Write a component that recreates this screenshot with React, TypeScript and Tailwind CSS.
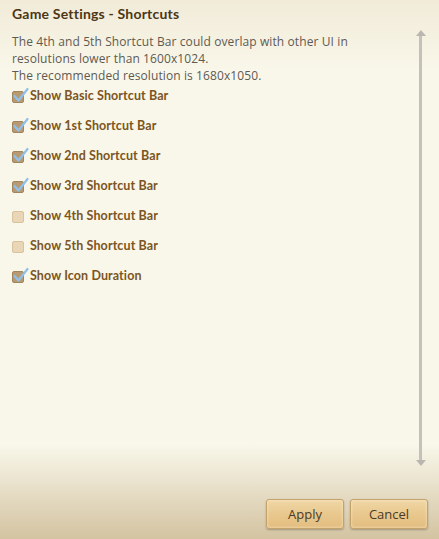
import React from 'react';

const options = [
  { label: 'Show Basic Shortcut Bar', on: true },
  { label: 'Show 1st Shortcut Bar', on: true },
  { label: 'Show 2nd Shortcut Bar', on: true },
  { label: 'Show 3rd Shortcut Bar', on: true },
  { label: 'Show 4th Shortcut Bar', on: false },
  { label: 'Show 5th Shortcut Bar', on: false },
  { label: 'Show Icon Duration', on: true },
];

const Check = ({ on }: { on: boolean }) => (
  <div className="relative w-[13px] h-[13px] shrink-0">
    <div
      className={
        on
          ? 'absolute left-0 top-[1px] w-[12px] h-[12px] rounded-[2px] bg-[#b89a72] border border-[#a3855d]'
          : 'absolute left-0 top-[1px] w-[12px] h-[12px] rounded-[2px] bg-[#e8d6b6] border border-[#d9c29c]'
      }
    />
    {on && (
      <svg className="absolute left-[1px] -top-[3px]" width="16" height="16" viewBox="0 0 16 16">
        <path d="M1.5 9 L5.5 13.5 L14.5 2" fill="none" stroke="#8fc0ec" strokeWidth="2.2" strokeLinecap="round" strokeLinejoin="round" />
      </svg>
    )}
  </div>
);

const Btn = ({ children }: { children: React.ReactNode }) => (
  <button className="w-[78px] h-[30px] rounded-[3px] border border-[#c4a26c] bg-gradient-to-b from-[#f0d7a6] via-[#e9c88e] to-[#e3bd80] shadow-[inset_0_0_3px_rgba(255,240,210,0.8),0_1px_2px_rgba(0,0,0,0.25)] text-[13px] text-[#4b3a24] pt-[2px]">
    {children}
  </button>
);

export default function App() {
  return (
    <div
      className="w-[439px] h-[539px] flex flex-col bg-[linear-gradient(to_bottom,#f1ebd8_0px,#f9f7ea_70px,#f9f7ea_445px,#d3c3a1_539px)] overflow-hidden"
      style={{ fontFamily: '"Open Sans", "Noto Sans", sans-serif' }}
    >
      <div className="flex flex-1 min-h-0">
        <div className="flex-1 pl-[12px] pt-[4px]">
          <h1
            className="text-[14px] leading-[20px] font-bold text-[#4d3616] tracking-[0.2px]"
            style={{ fontFamily: 'Lato, "Open Sans", sans-serif' }}
          >
            Game Settings - Shortcuts
          </h1>
          <p className="mt-[9px] text-[12px] leading-[17px] text-[#5e5a52] tracking-[0.1px]">
            The 4th and 5th Shortcut Bar could overlap with other UI in
            <br />
            resolutions lower than 1600x1024.
            <br />
            The recommended resolution is 1680x1050.
          </p>
          <div className="mt-[3px] flex flex-col gap-[11px]">
            {options.map((o) => (
              <div key={o.label} className="flex items-center gap-[5px] h-[19px]">
                <Check on={o.on} />
                <span
                  className="text-[12.5px] font-bold text-[#7c5522] tracking-[0.1px]"
                  style={{ fontFamily: 'Lato, "Open Sans", sans-serif' }}
                >
                  {o.label}
                </span>
              </div>
            ))}
          </div>
        </div>
        <div className="w-[36px] flex flex-col items-center pt-[30px] pr-[1px] h-[466px]">
          <svg width="10" height="6" viewBox="0 0 10 6">
            <path d="M5 0 L10 6 L0 6 Z" fill="#b9b7af" />
          </svg>
          <div className="w-[3px] flex-1 bg-[#c3c1ba]" />
          <svg width="10" height="6" viewBox="0 0 10 6">
            <path d="M0 0 L10 0 L5 6 Z" fill="#b9b7af" />
          </svg>
        </div>
      </div>
      <div className="flex justify-end gap-[6px] pr-[11px] pb-[10px]">
        <Btn>Apply</Btn>
        <Btn>Cancel</Btn>
      </div>
    </div>
  );
}
